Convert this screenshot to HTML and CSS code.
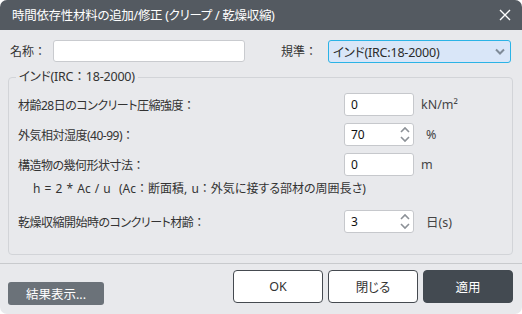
FILE: index.html
```html
<!DOCTYPE html>
<html lang="ja">
<head>
  <meta charset="UTF-8">
  <title>時間依存性材料の追加/修正</title>
  <link rel="stylesheet" href="styles.css">
</head>
<body>
  <div class="window">
    <div class="titlebar">
      <span class="title">時間依存性材料の追加/修正 (クリープ / 乾燥収縮)</span>
      <svg class="close" width="12" height="12" viewBox="0 0 12 12"><path d="M1 1 L11 11 M11 1 L1 11" stroke="#fff" stroke-width="1.4" fill="none"/></svg>
    </div>
    <div class="main">
      <div class="top-row">
        <label class="name-label" for="name">名称<span class="fw">：</span></label>
        <input id="name" class="name-input" type="text">
        <span class="code-label">規準<span class="fw">：</span></span>
        <div class="select">
          <span>インド(IRC:18-2000)</span>
          <svg width="10" height="7" viewBox="0 0 10 7"><path d="M1 1.5 L5 5.5 L9 1.5" stroke="#7f8b98" stroke-width="2" fill="none"/></svg>
        </div>
      </div>
      <fieldset class="group">
        <legend>インド(IRC<span class="fw">：</span>18-2000)</legend>
        <div class="row">
          <span class="label">材齢28日のコンクリート圧縮強度<span class="fw">：</span></span>
          <input class="num" type="text" value="0">
          <span class="unit">kN/m²</span>
        </div>
        <div class="row">
          <span class="label">外気相対湿度(40-99)<span class="fw">：</span></span>
          <div class="spin">
            <input type="text" value="70">
            <svg width="10" height="17" viewBox="0 0 10 17"><path d="M1 6 L5 2 L9 6 M1 11 L5 15 L9 11" stroke="#8c9197" stroke-width="1.6" fill="none"/></svg>
          </div>
          <span class="unit wide">%</span>
        </div>
        <div class="row">
          <span class="label">構造物の幾何形状寸法<span class="fw">：</span></span>
          <input class="num" type="text" value="0">
          <span class="unit">m</span>
        </div>
        <div class="formula">h = 2 * Ac / u &nbsp;(Ac<span class="fw">：</span>断面積, u<span class="fw">：</span>外気に接する部材の周囲長さ)</div>
        <div class="row">
          <span class="label">乾燥収縮開始時のコンクリート材齢<span class="fw">：</span></span>
          <div class="spin">
            <input type="text" value="3">
            <svg width="10" height="17" viewBox="0 0 10 17"><path d="M1 6 L5 2 L9 6 M1 11 L5 15 L9 11" stroke="#8c9197" stroke-width="1.6" fill="none"/></svg>
          </div>
          <span class="unit wide">日(s)</span>
        </div>
      </fieldset>
    </div>
    <div class="footer">
      <button class="btn-result">結果表示...</button>
      <button class="btn btn-ok">OK</button>
      <button class="btn">閉じる</button>
      <button class="btn btn-apply">適用</button>
    </div>
  </div>
</body>
</html>
```

FILE: styles.css
```css
html, body { margin: 0; background: #fff; }
body { font-family: 'Noto Sans', 'Noto Sans CJK JP', sans-serif; font-size: 12px; color: #333; font-feature-settings: "palt"; }
.fw { font-feature-settings: normal; letter-spacing: 0; }
.window { width: 522px; height: 314px; background: #e8e9ec; border-radius: 7px; overflow: hidden; display: flex; flex-direction: column; }
.titlebar { height: 30px; flex: none; background: #545a61; color: #fff; display: flex; align-items: center; justify-content: space-between; padding: 0 11px 0 12px; }
.title { font-size: 12.5px; line-height: 16px; padding-top: 1px; letter-spacing: -0.3px; }
.main { padding: 10px 9px 0 8px; }
.top-row { display: flex; align-items: center; height: 22px; }
.name-label { width: 45px; padding-left: 2px; box-sizing: border-box; }
.name-input { width: 192px; height: 22px; box-sizing: border-box; border: 1px solid #c9cbcf; border-radius: 3px; background: #fff; padding: 0 5px; font: inherit; outline: none; }
.code-label { margin-left: 36px; width: 47px; }
.select { width: 183px; height: 23px; box-sizing: border-box; border: 1px solid #2bb3e6; border-radius: 3px; background: #d9e6f8; display: flex; align-items: center; justify-content: space-between; padding: 0 5px 0 4px; color: #2b2b2b; font-size: 12.5px; letter-spacing: -0.2px; }
.group { margin: 8px 0 0 0; padding: 9px 10px 14px 8px; border: 1px solid #d2d4d8; border-radius: 4px; min-width: 0; }
.group legend { padding: 0 3px; margin-left: -1px; line-height: 14px; font-size: 12.5px; letter-spacing: -0.2px; }
.row { display: flex; align-items: center; height: 23px; margin-bottom: 7px; }
.label { width: 327px; padding-left: 1px; box-sizing: border-box; letter-spacing: -0.5px; }
.num { width: 70px; height: 23px; box-sizing: border-box; border: 1px solid #c6c8cc; border-radius: 3px; background: #fff; padding: 0 6px; font: inherit; color: #111; outline: none; }
.spin { width: 70px; height: 23px; box-sizing: border-box; border: 1px solid #c6c8cc; border-radius: 3px; background: #fff; display: flex; align-items: center; padding: 0 3px 0 6px; }
.spin input { flex: 1; min-width: 0; border: none; padding: 0; font: inherit; color: #111; outline: none; background: transparent; }
.unit { margin-left: 7px; font-size: 12.5px; color: #444; }
.unit.wide { margin-left: 12px; }
.formula { padding-left: 16px; line-height: 14px; margin: -1px 0 14px 0; word-spacing: 1px; }
.footer { flex: 1; border-top: 1px solid #c8cacd; margin-top: 8px; display: flex; align-items: flex-start; gap: 5px; padding: 6px 9px 0 8px; }
button { font: inherit; cursor: pointer; }
.btn-result { margin-top: 12px; width: 96px; height: 23px; border: none; border-radius: 3px; background: #6b7279; color: #fff; font-size: 12.5px; }
.btn { width: 90px; height: 33px; border: 1px solid #454a50; border-radius: 4px; background: #fff; color: #333; font-size: 12.5px; }
.btn-ok { margin-left: auto; }
.btn-apply { background: #434a51; border-color: #434a51; color: #fff; }
```
